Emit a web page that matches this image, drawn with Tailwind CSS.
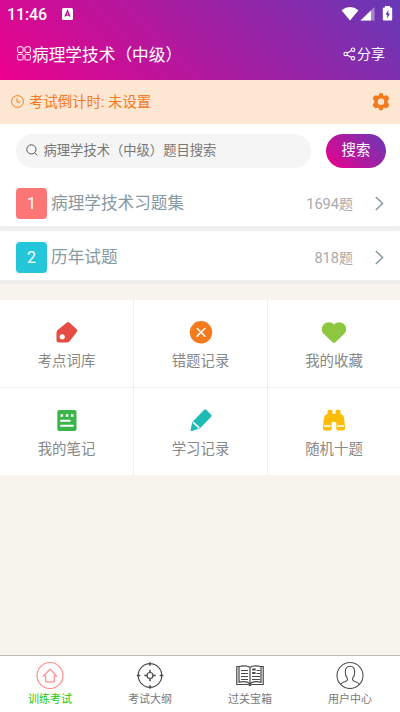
<!DOCTYPE html>
<html lang="zh-CN">
<head>
<meta charset="utf-8">
<meta name="viewport" content="width=device-width, initial-scale=1">
<title>病理学技术（中级）</title>
<script src="https://cdn.jsdelivr.net/npm/@tailwindcss/browser@4"></script>
</head>
<body class="h-[712px] w-[400px] overflow-hidden bg-[#f7f4ed] font-[Roboto,'Noto_Sans_CJK_SC',sans-serif] whitespace-nowrap">
<div class="flex h-[712px] flex-col">
  <header class="h-[80px] shrink-0 bg-[linear-gradient(45deg,#ec008c,#6739b6)] text-white">
    <div class="flex h-7 items-center pl-[7px] pr-[7px]">
      <span class="pt-px text-[16px] leading-7 font-medium tracking-[-0.1px]">11:46</span>
      <svg class="ml-[15px]" width="11" height="12" viewBox="0 0 11 12"><rect width="11" height="12" rx="1.5" fill="#fff"/><path d="M3 8.5 5.5 3 8 8.5M4 7h3" fill="none" stroke="#b8149a" stroke-width="1.4"/></svg>
      <svg class="ml-auto" width="52" height="16" viewBox="0 0 52 16">
        <path d="M.5 4.2Q9 -2.4 17.500 4.200L9 14.500Z" fill="#fff"/>
        <path d="M19.500 14.500 33.500 1v13.500Z" fill="#fff" fill-opacity=".4"/><path d="M19.500 14.500 30 4.400v10.100Z" fill="#fff"/>
        <path d="M44 1.500V0h5v1.500h1q1.200 0 1.200 1.200v10.600q0 1.200-1.200 1.200h-7q-1.200 0-1.200-1.200V2.700q0-1.200 1.200-1.200Z" fill="#fff"/><path d="m47.500 3.800-3 5h1.700v3.600l2.700-5h-1.700Z" fill="#6c39b4"/>
      </svg>
    </div>
    <div class="flex h-[52px] items-center justify-between pl-[17px] pr-[15px]">
      <div class="flex items-center text-[16.700px]">
        <svg class="mr-[1px]" width="14" height="15" viewBox="0 0 14 15" fill="none" stroke="#fff" stroke-width="1"><rect x=".6" y=".8" width="5.500" height="5.700" rx="1.300"/><rect x="7.900" y=".8" width="5.500" height="5.700" rx="1.300"/><rect x=".6" y="8.300" width="5.500" height="5.700" rx="1.300"/><rect x="7.900" y="8.300" width="5.500" height="5.700" rx="1.300"/></svg>
        <span class="pt-[3px]">病理学技术（中级）</span>
      </div>
      <div class="flex items-center gap-[1px] text-[14px]">
        <svg width="13" height="14" viewBox="0 0 13 14" fill="none" stroke="#fff" stroke-width="1.100"><circle cx="2.600" cy="7" r="1.700"/><circle cx="10" cy="2.700" r="1.700"/><circle cx="10" cy="11.300" r="1.700"/><path d="m4.100 6.100 4.400-2.500M4.100 7.900l4.400 2.500"/></svg>
        <span>分享</span>
      </div>
    </div>
  </header>

  <div class="flex h-[44px] shrink-0 items-center justify-between bg-[#fde6d2] pl-[11px] pr-[10px] text-[#f37b1d]">
    <div class="flex items-center gap-[5px] text-[14.400px]">
      <svg width="13" height="14" viewBox="0 0 13 14" fill="none" stroke="currentColor" stroke-width="1"><circle cx="6.500" cy="6.500" r="5.900"/><path d="M6 3.300v3.800h3.300"/></svg>
      <span class="pt-[2px]">考试倒计时: 未设置</span>
    </div>
    <svg width="18" height="20" viewBox="0 0 18 20"><path d="M7.200 1.600Q9 .2 10.800 1.600L11.500 4 14.600 3.300Q16.800 4.200 17.200 6.500L15.400 9.700 17.200 12.900Q16.800 15.300 14.600 16.200L11.500 15.600 10.800 17.800Q9 19.200 7.200 17.800L6.500 15.600 3.400 16.200Q1.200 15.300.8 12.900L2.600 9.700.8 6.500Q1.200 4.200 3.400 3.300L6.500 4Z" fill="currentColor"/><circle cx="9" cy="9.700" r="3.200" fill="#fde6d2"/></svg>
  </div>

  <div class="flex h-[53px] shrink-0 items-center justify-between bg-white pl-[15.500px] pr-[14px]">
    <div class="flex h-[34px] w-[295px] items-center gap-[6px] rounded-full bg-[#f5f5f5] pl-[10px] text-[13.300px] text-[#777]">
      <svg class="relative -top-px" width="12" height="12" viewBox="0 0 12 12" fill="none" stroke="#555"><circle cx="5.400" cy="5.400" r="4.600"/><path d="m8.800 8.900 2.400 2.400"/></svg>
      <span>病理学技术（中级）题目搜索</span>
    </div>
    <button class="h-[34px] w-[60px] rounded-full bg-[linear-gradient(45deg,#ec008c,#6739b6)] text-[14.400px] leading-[33px] text-white">搜索</button>
  </div>

  <section class="shrink-0">
    <div class="flex h-[54px] items-center rounded-b-[4px] border-b-[5px] border-[#eee] bg-white pl-[16px] pr-[16px]">
      <span class="relative top-[2px] h-[31px] w-[31px] rounded-[4px] bg-[#fc7676] text-center text-[16px] leading-[31px] text-white">1</span>
      <span class="ml-[4px] pt-[5px] text-[16.650px] text-[#8799a3]">病理学技术习题集</span>
      <span class="relative top-[3px] ml-auto text-[14px] text-[#aaa]"><span class="text-[14.600px]">1694</span>题</span>
      <svg class="relative top-[2px] ml-[22px]" width="9" height="15" viewBox="0 0 9 15" fill="none" stroke="#8799a3" stroke-width="1.500"><path d="m.8 1 6.800 6.500L.8 14"/></svg>
    </div>
    <div class="flex h-[53px] items-center rounded-b-[4px] border-b-[4px] border-[#eee] bg-white pl-[16px] pr-[16px]">
      <span class="relative top-[2px] h-[31px] w-[31px] rounded-[4px] bg-[#26c6da] text-center text-[16px] leading-[31px] text-white">2</span>
      <span class="ml-[4px] pt-[5px] text-[16.650px] text-[#8799a3]">历年试题</span>
      <span class="relative top-[3px] ml-auto text-[14px] text-[#aaa]"><span class="text-[14.600px]">818</span>题</span>
      <svg class="relative top-[2px] ml-[22px]" width="9" height="15" viewBox="0 0 9 15" fill="none" stroke="#8799a3" stroke-width="1.500"><path d="m.8 1 6.800 6.500L.8 14"/></svg>
    </div>
  </section>

  <section class="mt-[16px] grid shrink-0 grid-cols-[134px_134px_132px] grid-rows-[88px_87px] bg-white text-[14.400px] text-[#888]">
    <div class="flex flex-col items-center gap-[7px] border-r border-b border-[#eee] pt-[20px]">
      <svg width="24" height="24" viewBox="0 0 24 24"><path d="M11.600 2.700q1.500-1.300 3 0l7.300 6.800q1 1 .1 2.200L14.800 21q-1.300 1.600-3.200 1.600H3.800Q1.500 22.600 1.500 20.300v-7.600q0-1.700 1.200-2.700Z" fill="#e54d42"/><circle cx="7.200" cy="16.800" r="2.600" fill="#fff"/></svg>
      <span class="leading-[22px]">考点词库</span>
    </div>
    <div class="flex flex-col items-center gap-[7px] border-r border-b border-[#eee] pt-[20px]">
      <svg width="24" height="24" viewBox="0 0 24 24"><circle cx="12" cy="12.300" r="11.200" fill="#f37b1d"/><path d="m8.200 8.500 7.600 7.600m0-7.600-7.600 7.600" stroke="#fff" stroke-width="1.500" stroke-linecap="round"/></svg>
      <span class="leading-[22px]">错题记录</span>
    </div>
    <div class="flex flex-col items-center gap-[7px] border-b border-[#eee] pt-[20px]">
      <svg width="26" height="24" viewBox="0 0 26 24"><path d="M13 4.500C9.800 1.300 5.400 1.600 2.900 4.200.2 7 .1 11.200 2.900 14.100l8.400 8q1.700 1.600 3.400 0l8.400-8c2.800-2.900 2.700-7.100 0-9.900C20.600 1.600 16.200 1.300 13 4.500Z" fill="#8dc63f"/></svg>
      <span class="leading-[22px]">我的收藏</span>
    </div>
    <div class="flex flex-col items-center gap-[7px] border-r border-[#eee] pt-[20px]">
      <svg width="24" height="24" viewBox="0 0 24 24"><rect x="2.300" y="2" width="19.200" height="21" rx="2" fill="#39b54a"/><path d="M5.500 7.500h2.600m2.600 0h2.600m2.600 0h2.600" stroke="#fff" stroke-width="2.300"/><path d="M6 12.700h8.800M6 17.700h12" stroke="#fff" stroke-width="2" stroke-linecap="round"/></svg>
      <span class="leading-[22px]">我的笔记</span>
    </div>
    <div class="flex flex-col items-center gap-[7px] border-r border-[#eee] pt-[20px]">
      <svg width="24" height="24" viewBox="0 0 24 24"><path d="M15.200 1.800q1-1 2 0l4.900 5q1 1 .1 2L11 20.300 3 22.900q-1.600.4-1.400-1.200L3.300 14Z" fill="#1cbbb4"/><path d="m4.500 14.700 5.200 4.700" stroke="#fff" stroke-width="1.700" stroke-linecap="round"/></svg>
      <span class="leading-[22px]">学习记录</span>
    </div>
    <div class="flex flex-col items-center gap-[7px] pt-[20px]">
      <svg width="24" height="24" viewBox="0 0 24 24"><path d="M5.500 3.200q0-1.500 1.500-1.500h2q1.500 0 1.500 1.500v2.500h3V3.200q0-1.500 1.500-1.500h2q1.500 0 1.500 1.500v2.500l2 1.200q1.500 1.300 1.700 3.600l.8 9v.8q0 2.300-2.200 2.300h-4.500q-2 0-2-2v-5.400q0-1.200-1.200-1.200h-2.200q-1.200 0-1.200 1.200v5.400q0 2-2 2H3.200Q1 22.600 1 20.300v-.8l.8-9q.2-2.300 1.700-3.600l2-1.200Z" fill="#fbbd08"/><path d="M2 18h6.700M15.300 18H22" stroke="#fff3c6" stroke-width="1.900"/></svg>
      <span class="leading-[22px]">随机十题</span>
    </div>
  </section>

  <nav class="mt-auto grid h-[57px] shrink-0 grid-cols-4 border-t-[1.500px] border-[#bdbdb8] bg-white text-[11px] text-[#77787c]">
    <div class="flex flex-col items-center gap-[3px] pt-[5px]">
      <svg width="28" height="28" viewBox="0 0 28 28" fill="none" stroke="#ff8d8d" stroke-width="1.200"><circle cx="14" cy="14.500" r="13"/><path d="m7.500 15 6.500-6.800 6.500 6.800h-2.200v5.800H9.700V15Z"/></svg>
      <span class="leading-[16px] text-[#27c80e]">训练考试</span>
    </div>
    <div class="flex flex-col items-center gap-[3px] pt-[5px]">
      <svg width="28" height="28" viewBox="0 0 28 28" fill="none" stroke="#4b4b4b" stroke-width="1.200"><circle cx="14" cy="14.500" r="11.800"/><circle cx="14" cy="14.500" r="3"/><path d="M14 1.200v3.500M14 24.300v3.500M.8 14.500h3.500M23.700 14.500h3.500M14 8.800v3M14 17.200v3M8.300 14.500h3M16.700 14.500h3" stroke-width="1.500"/></svg>
      <span class="leading-[16px]">考试大纲</span>
    </div>
    <div class="flex flex-col items-center gap-[3px] pt-[5px]">
      <svg width="28" height="28" viewBox="0 0 28 28" fill="none" stroke="#484848"><path d="M14 6.300Q10.500 3.800 3 5.500H.8v18H11.500q1.500 0 2.500 1 1-1 2.500-1h10.700v-18H25Q17.500 3.800 14 6.300ZM3 5.500v15.700q7.500-1.500 11 1.500 3.500-3 11-1.500V5.500M14 6.300v17.500" stroke-width="1.200"/><path d="M5 9.500h7M5 12.500h7M5 15.500h7M5 18.500h7M20.500 9.500h3.500M20.500 12.500h3.500M16 15.500h8M16 18.500h8"/><path d="M16.200 8.500h3.500M16.200 12h3.300" stroke-width="2"/></svg>
      <span class="leading-[16px]">过关宝箱</span>
    </div>
    <div class="flex flex-col items-center gap-[3px] pt-[5px]">
      <svg width="28" height="28" viewBox="0 0 28 28" fill="none" stroke="#505050" stroke-width="1.100"><circle cx="14" cy="14.500" r="13"/><path d="M4.800 23.500c.4-2 2.500-2.300 5-3.200q2.300-1 1.500-3.100C9.500 15.500 9.300 13.300 9.300 11 9.300 7.300 11 5.200 14 5.200s4.700 2.100 4.700 5.800c0 2.300-.2 4.500-2 6.200q-.8 2.100 1.500 3.100c2.500.9 4.600 1.200 5 3.200"/></svg>
      <span class="leading-[16px]">用户中心</span>
    </div>
  </nav>
</div>
</body>
</html>
